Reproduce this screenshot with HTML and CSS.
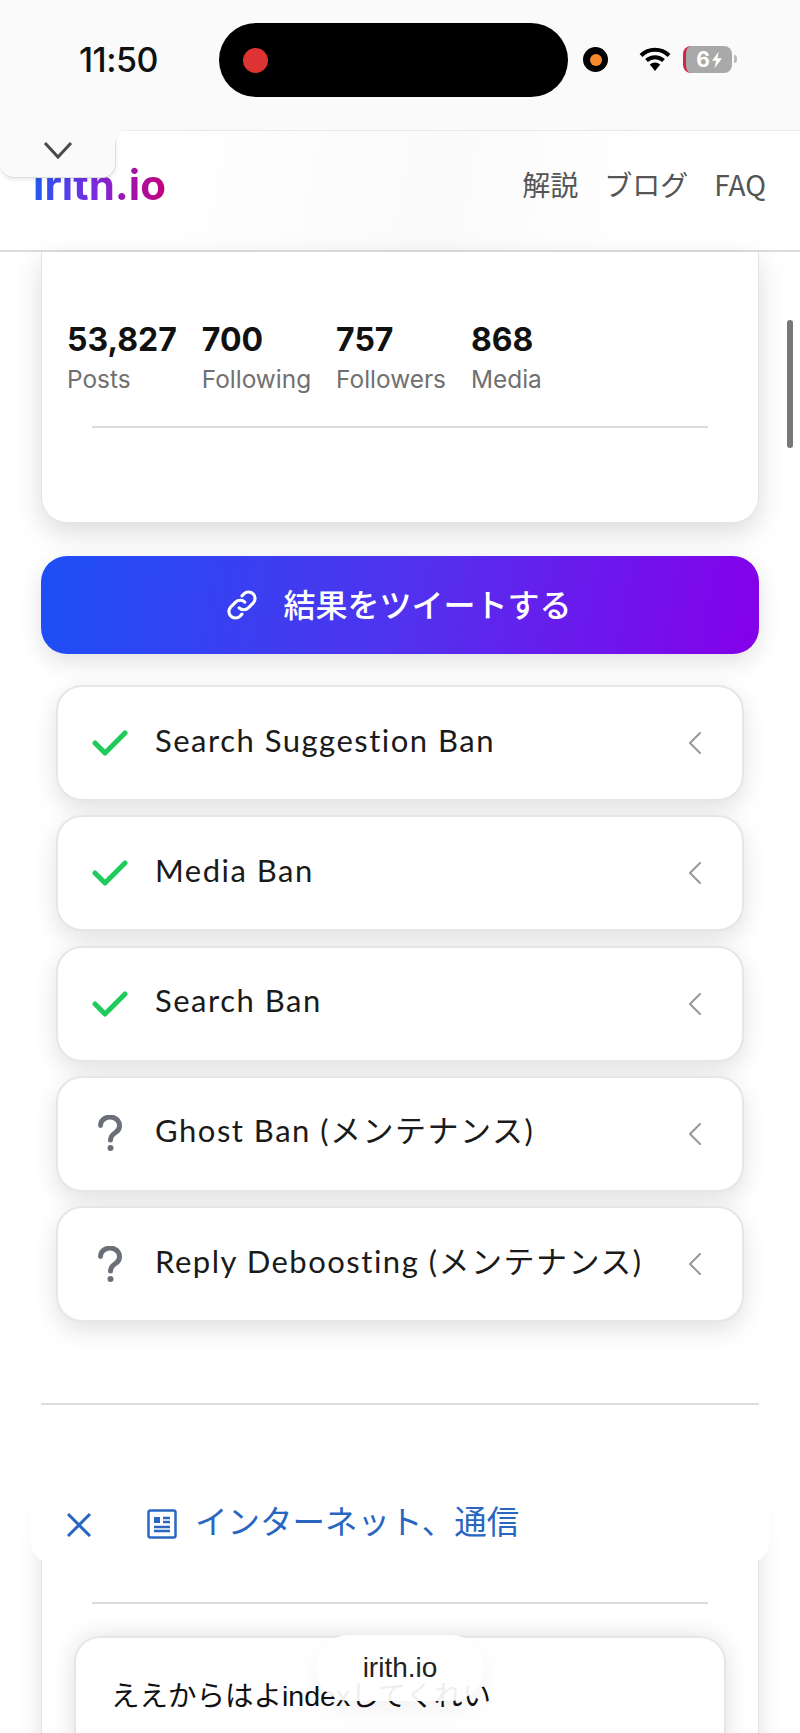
FILE: index.html
```html
<!DOCTYPE html>
<html lang="ja">
<head>
    <meta charset="UTF-8">
    <meta name="viewport" content="width=device-width, initial-scale=1.0">
    <title>irith.io</title>
    <link rel="stylesheet" href="styles.css">
</head>
<body>
    <div class="status-bar">
        <div class="clock">11:50</div>
        <div class="island"><span class="rec-dot"></span></div>
        <div class="cam-dot"><span></span></div>
        <svg class="wifi" viewBox="0 0 32 26">
            <path d="M2 9.500a20 20 0 0 1 28 0" />
            <path d="M7.500 14.500a12.500 12.500 0 0 1 17 0" />
            <path class="wifi-tip" d="M10.800 18.500a7.500 7.500 0 0 1 10.400 0L16 25z" />
        </svg>
        <div class="battery">6<svg viewBox="0 0 12 20"><path d="M8 0 0 11h5l-2 9 9-12H6.500z" /></svg></div>
        <div class="battery-nub"></div>
    </div>

    <header class="site-header">
        <div class="logo">irith.io</div>
        <nav class="nav">
            <a>解説</a>
            <a>ブログ</a>
            <a>FAQ</a>
        </nav>
    </header>

    <main class="content">
        <section class="profile-card">
            <div class="stats">
                <div class="stat"><b>53,827</b><span>Posts</span></div>
                <div class="stat"><b>700</b><span>Following</span></div>
                <div class="stat"><b>757</b><span>Followers</span></div>
                <div class="stat"><b>868</b><span>Media</span></div>
            </div>
            <div class="card-rule"></div>
        </section>

        <a class="tweet-button">
            <svg viewBox="0 0 24 24">
                <path d="M10 14a4.500 4.500 0 0 0 6.500 0l3.500-3.500a4.600 4.600 0 0 0-6.500-6.500l-1.500 1.500" />
                <path d="M14 10a4.500 4.500 0 0 0-6.500 0L4 13.500a4.600 4.600 0 0 0 6.500 6.500l1.500-1.500" />
            </svg>
            結果をツイートする
        </a>

        <ul class="check-list">
            <li class="check-row">
                <svg class="icon-ok" viewBox="0 0 36 26"><path d="M3 13l10 10L33 3" /></svg>
                <span class="check-name">Search Suggestion Ban</span>
                <svg class="chevron" viewBox="0 0 12 22"><path d="M11 1 1 11l10 10" /></svg>
            </li>
            <li class="check-row">
                <svg class="icon-ok" viewBox="0 0 36 26"><path d="M3 13l10 10L33 3" /></svg>
                <span class="check-name">Media Ban</span>
                <svg class="chevron" viewBox="0 0 12 22"><path d="M11 1 1 11l10 10" /></svg>
            </li>
            <li class="check-row">
                <svg class="icon-ok" viewBox="0 0 36 26"><path d="M3 13l10 10L33 3" /></svg>
                <span class="check-name">Search Ban</span>
                <svg class="chevron" viewBox="0 0 12 22"><path d="M11 1 1 11l10 10" /></svg>
            </li>
            <li class="check-row">
                <svg class="icon-unknown" viewBox="0 0 24 36"><path d="M2.500 10a9.500 8.500 0 1 1 15 7c-3 2-5 3.500-5 7.500" /><circle cx="12.500" cy="32.500" r="3" /></svg>
                <span class="check-name">Ghost Ban (メンテナンス)</span>
                <svg class="chevron" viewBox="0 0 12 22"><path d="M11 1 1 11l10 10" /></svg>
            </li>
            <li class="check-row">
                <svg class="icon-unknown" viewBox="0 0 24 36"><path d="M2.500 10a9.500 8.500 0 1 1 15 7c-3 2-5 3.500-5 7.500" /><circle cx="12.500" cy="32.500" r="3" /></svg>
                <span class="check-name">Reply Deboosting (メンテナンス)</span>
                <svg class="chevron" viewBox="0 0 12 22"><path d="M11 1 1 11l10 10" /></svg>
            </li>
        </ul>

        <hr class="section-rule">

        <section class="tweet-card">
            <div class="card-rule"></div>
            <div class="tweet-box">ええからはよindexしてくれい</div>
        </section>
    </main>

    <!-- things floating over the page -->
    <div class="collapse-tab">
        <svg viewBox="0 0 30 20"><path d="M2 2l13 14L28 2" /></svg>
    </div>
    <div class="scroll-thumb"></div>
    <div class="topic-bar">
        <svg class="topic-close" viewBox="0 0 26 24"><path d="M2 1l22 22M24 1 2 23" /></svg>
        <svg class="topic-news" viewBox="0 0 30 30">
            <rect x="1.500" y="1.500" width="27" height="27" rx="2" />
            <rect class="fill" x="7" y="8" width="6" height="6" />
            <path d="M16 9h7M16 13h7M7 18h16M7 22h16" />
        </svg>
        <span>インターネット、通信</span>
    </div>
    <div class="url-pill">irith.io</div>
</body>
</html>
```

FILE: styles.css
```css
* {
    margin: 0;
    padding: 0;
    box-sizing: border-box;
}

body {
    position: relative;
    width: 800px;
    height: 1733px;
    overflow: hidden;
    background-color: #fff;
    font-family: 'Inter', 'Noto Sans CJK JP', sans-serif;
    color: #111;
}

/* phone status bar */
.status-bar {
    height: 130px;
    padding-top: 23px;
    background-color: #fafafa;
    display: flex;
    align-items: flex-start;
}

.clock {
    width: 219px;
    height: 74px;
    padding-left: 79px;
    line-height: 74px;
    font-size: 34px;
    font-weight: 500;
    letter-spacing: -0.5px;
    color: #111;
}

.island {
    width: 349px;
    height: 74px;
    background-color: #000;
    border-radius: 37px;
    display: flex;
    align-items: center;
    padding-left: 24px;
}

.rec-dot {
    width: 25px;
    height: 25px;
    border-radius: 50%;
    background-color: #dd3333;
}

.cam-dot {
    width: 25px;
    height: 25px;
    margin: 24px 0 0 15px;
    border-radius: 50%;
    background-color: #000;
    display: flex;
    align-items: center;
    justify-content: center;
}

.cam-dot span {
    width: 12px;
    height: 12px;
    border-radius: 50%;
    background-color: #f58a2c;
}

.wifi {
    width: 32px;
    height: 26px;
    margin: 23px 0 0 31px;
    fill: none;
    stroke: #000;
    stroke-width: 4;
}

.wifi-tip {
    fill: #000;
    stroke: none;
}

.battery {
    width: 49px;
    height: 27px;
    margin: 23px 0 0 12px;
    background-color: #a9a9a9;
    border-left: 3px solid #d0264a;
    border-radius: 8px;
    display: flex;
    align-items: center;
    justify-content: center;
    gap: 2px;
    color: #fff;
    font-size: 21px;
    font-weight: 700;
}

.battery svg {
    width: 10px;
    height: 18px;
    fill: #fff;
}

.battery-nub {
    width: 3px;
    height: 8px;
    margin: 32px 0 0 2px;
    background-color: #bbb;
    border-radius: 0 3px 3px 0;
}

/* site header */
.site-header {
    height: 122px;
    padding: 0 34px 0 33px;
    background: linear-gradient(100deg, #fff 20%, #fafafb 55%, #fff 80%);
    border-top: 1px solid #e8e8e8;
    border-bottom: 2px solid #dedede;
    display: flex;
    align-items: center;
    justify-content: space-between;
}

.logo {
    margin-bottom: 13px;
    font-size: 42px;
    font-weight: 700;
    background: linear-gradient(to right, #1f5bf0, #7a2be0 45%, #c4007a);
    -webkit-background-clip: text;
    background-clip: text;
    color: transparent;
}

.nav {
    display: flex;
    gap: 26px;
    margin-bottom: 13px;
    font-family: 'Noto Sans CJK JP', sans-serif;
    font-size: 28px;
    color: #555;
}

.content {
    padding: 0 41px;
}

/* cards */
.profile-card {
    height: 271px;
    padding: 68px 25px 0;
    background-color: #fff;
    border: 1px solid #e4e4e4;
    border-top: none;
    border-radius: 0 0 26px 26px;
    box-shadow: 0 10px 28px rgba(0, 0, 0, 0.14);
}

.stats {
    display: flex;
    gap: 25px;
}

.stat {
    display: flex;
    flex-direction: column;
}

.stat b {
    font-size: 32px;
    line-height: 40px;
    font-weight: 700;
}

.stat span {
    margin-top: 1px;
    font-size: 24.400px;
    line-height: 36px;
    color: #707070;
}

.card-rule {
    height: 2px;
    background-color: #dcdcdc;
}

.profile-card .card-rule {
    margin: 29px 25px 0;
}

.tweet-button {
    height: 98px;
    margin-top: 33px;
    padding: 0 3px 4px 0;
    border-radius: 26px;
    background: linear-gradient(100deg, #1c4ff5, #5033ee 50%, #8500ea 100%);
    box-shadow: 0 8px 24px rgba(0, 0, 0, 0.12);
    display: flex;
    align-items: center;
    justify-content: center;
    gap: 24px;
    color: #fff;
    font-size: 32px;
    font-weight: 500;
}

.tweet-button svg {
    width: 34px;
    height: 34px;
    margin-top: 4px;
    fill: none;
    stroke: #fff;
    stroke-width: 2.200;
    stroke-linecap: round;
}

/* ban check rows */
.check-list {
    list-style: none;
    margin-top: 31px;
    padding: 0 15px;
    display: flex;
    flex-direction: column;
    gap: 14.300px;
}

.check-row {
    height: 116px;
    padding: 0 41px 0 34px;
    background-color: #fff;
    border: 2px solid #e6e6e6;
    border-radius: 26px;
    box-shadow: 0 8px 24px rgba(0, 0, 0, 0.12);
    display: flex;
    align-items: center;
}

.check-row > svg {
    flex-shrink: 0;
    fill: none;
    stroke-linecap: round;
}

.icon-ok {
    width: 36px;
    height: 26px;
    stroke: #1ecb5b;
    stroke-width: 5;
    stroke-linejoin: round;
}

.icon-unknown {
    width: 24px;
    height: 37px;
    margin: 0 6px;
    stroke: #6b7078;
    stroke-width: 5;
}

.icon-unknown circle {
    fill: #6b7078;
    stroke: none;
}

.check-name {
    flex: 1;
    margin: -7px 0 0 27px;
    font-family: 'Lato', 'Noto Sans CJK JP', sans-serif;
    font-size: 31px;
    letter-spacing: 1.500px;
    color: #1a1a1a;
}

.check-row:nth-child(n+4) .check-name {
    margin-top: -10px;
}

.chevron {
    width: 12px;
    height: 22px;
    stroke: #999;
    stroke-width: 2;
}

.section-rule {
    height: 2px;
    margin-top: 81px;
    border: none;
    background-color: #dcdcdc;
}

.tweet-card {
    margin-top: 90px;
    padding-top: 106px;
    height: 400px;
    background-color: #fff;
    border: 1px solid #e4e4e4;
    border-radius: 26px;
    box-shadow: 0 8px 24px rgba(0, 0, 0, 0.12);
}

.tweet-card .card-rule {
    margin: 0 50px;
}

.tweet-box {
    margin: 32px 32px 0;
    height: 200px;
    padding: 35px 35px;
    border: 2px solid #e6e6e6;
    border-radius: 26px;
    box-shadow: 0 0 24px rgba(0, 0, 0, 0.12);
    font-family: 'Liberation Sans', 'Noto Sans CJK JP', sans-serif;
    font-size: 28.500px;
    white-space: nowrap;
}

/* overlays */
.collapse-tab {
    position: absolute;
    left: 0;
    top: 130px;
    width: 116px;
    height: 48px;
    background-color: #fafafa;
    border-radius: 0 0 14px 14px;
    border: 1px solid #ddd;
    border-top: none;
    border-left: none;
    box-shadow: 0 2px 4px rgba(0, 0, 0, 0.08);
    display: flex;
    justify-content: center;
    padding-top: 11px;
}

/* the little inward curve where the tab meets the header */
.collapse-tab::after {
    content: '';
    position: absolute;
    left: 100%;
    top: 0;
    width: 12px;
    height: 12px;
    background: radial-gradient(circle at 100% 100%, transparent 11px, #fafafa 12px);
}

.collapse-tab svg {
    width: 30px;
    height: 20px;
    fill: none;
    stroke: #4a4a4a;
    stroke-width: 3;
}

.scroll-thumb {
    position: absolute;
    left: 787px;
    top: 320px;
    width: 6px;
    height: 128px;
    border-radius: 3px;
    background-color: #777;
}

.topic-bar {
    position: absolute;
    left: 30px;
    top: 1462px;
    width: 740px;
    height: 103px;
    padding: 7px 0 0 36px;
    background-color: #fff;
    border-radius: 0 0 26px 26px;
    display: flex;
    align-items: center;
    color: #2866c2;
    font-size: 32.500px;
}

.topic-bar svg {
    flex-shrink: 0;
    fill: none;
    stroke: #2866c2;
}

.topic-close {
    width: 26px;
    height: 24px;
    margin-top: 16px;
    stroke-width: 3;
}

.topic-news {
    width: 30px;
    height: 30px;
    margin: 14px 0 0 55px;
    stroke-width: 2.500;
}

.topic-bar .fill {
    fill: #2866c2;
    stroke: none;
}

.topic-bar span {
    margin-left: 18px;
    margin-top: 5px;
}

.url-pill {
    position: absolute;
    left: 316px;
    top: 1635px;
    width: 168px;
    height: 66px;
    border-radius: 33px;
    background-color: rgba(255, 255, 255, 0.93);
    box-shadow: 0 10px 24px rgba(0, 0, 0, 0.05);
    display: flex;
    align-items: center;
    justify-content: center;
    font-family: 'Liberation Sans', sans-serif;
    font-size: 28px;
    color: #222;
}
```
